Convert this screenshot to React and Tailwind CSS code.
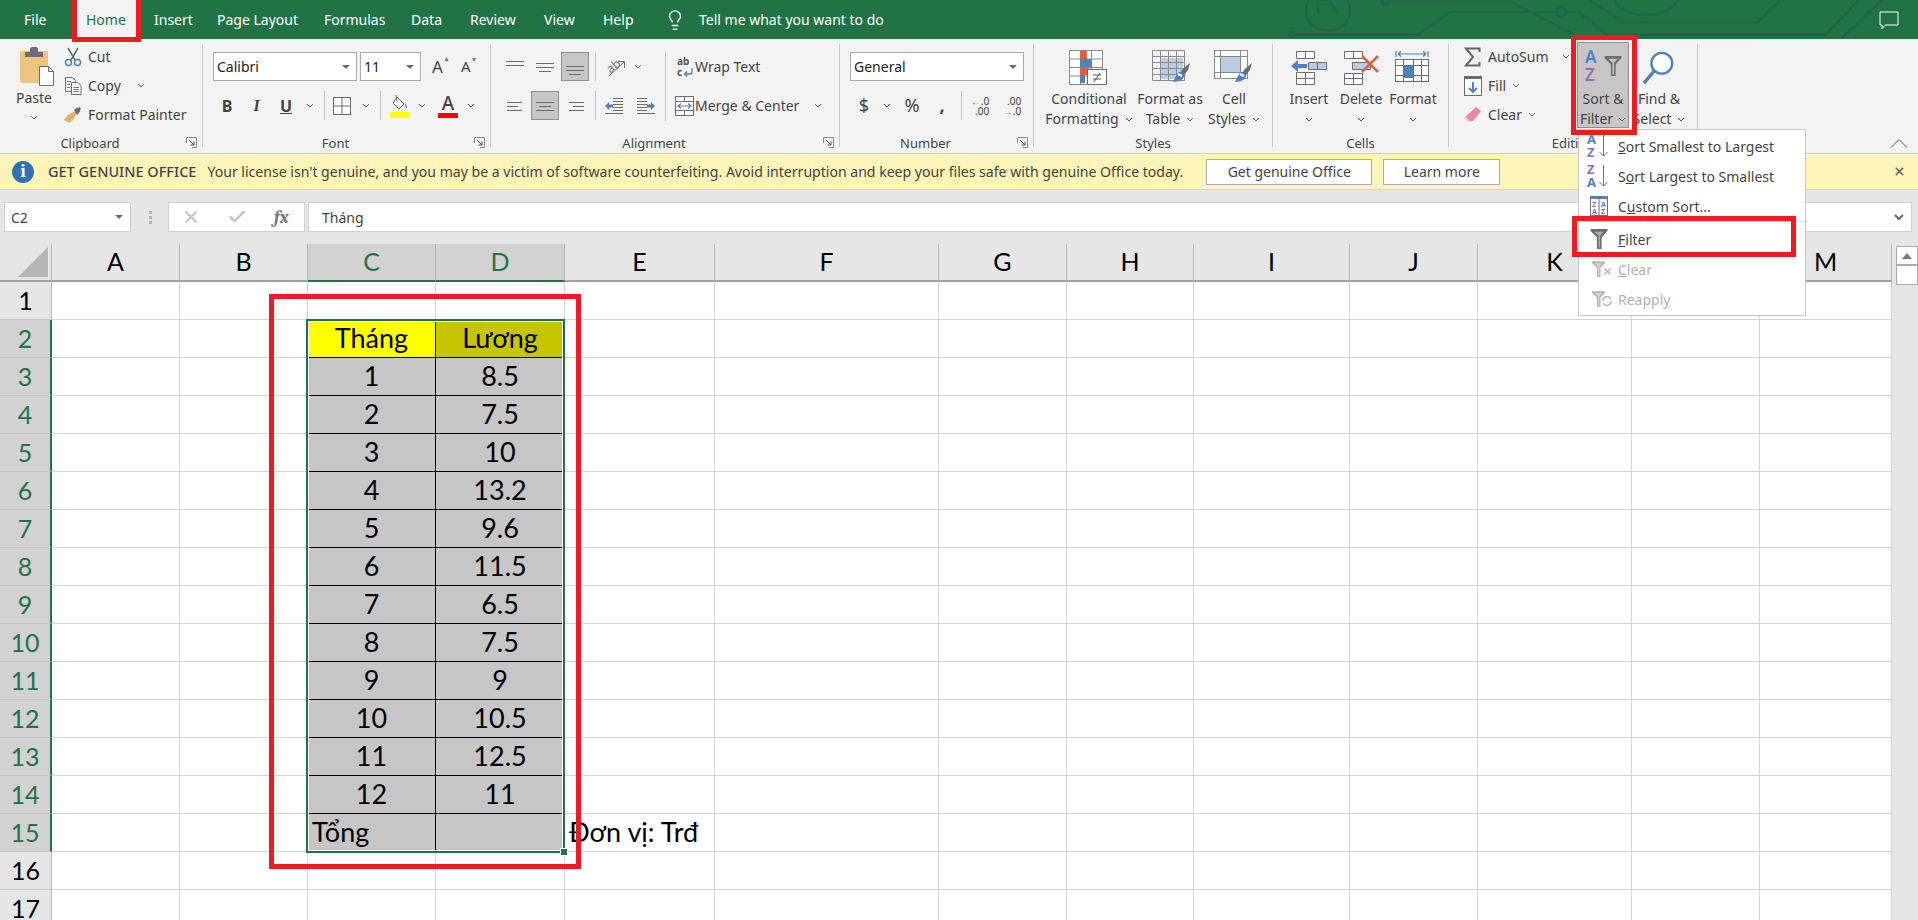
import { Lightbulb, X, Check } from 'lucide-react'

const ICON_GRAY = '#6d6d6d'
const BLUE = '#4f81bd'
const PURPLE = '#9a6ab8'
const ORANGE = '#d8633f'

const TABS = [
  ['File', 'w-[53px]'],
  ['Home', 'mr-[17px] flex h-full w-[60px] items-center bg-[#f3f3f3] pl-[9px] text-[#217346]'],
  ['Insert', 'w-[63px]'],
  ['Page Layout', 'w-[107px]'],
  ['Formulas', 'w-[87px]'],
  ['Data', 'w-[59px]'],
  ['Review', 'w-[74px]'],
  ['View', 'w-[59px]'],
  ['Help', 'w-[61px]'],
]

const COLUMNS = ['A', 'B', 'C', 'D', 'E', 'F', 'G', 'H', 'I', 'J', 'K', 'L', 'M']
const SALARY = ['8.5', '7.5', '10', '13.2', '9.6', '11.5', '6.5', '7.5', '9', '10.5', '12.5', '11']

function Chev({ className = '' }) {
  return (
    <svg width="8" height="5" viewBox="0 0 8 5" className={`shrink-0 ${className}`}>
      <path d="M1 1l3 3 3-3" fill="none" stroke="#666" strokeWidth="1" />
    </svg>
  )
}

function Caret() {
  return (
    <svg width="8" height="4" viewBox="0 0 8 4" className="shrink-0">
      <path d="M0 0h8L4 4z" fill="#6d6d6d" />
    </svg>
  )
}

function Launcher() {
  return (
    <svg width="11" height="11" viewBox="0 0 11 11">
      <path d="M.5 6V.5h10v10H6" fill="none" stroke="#8a8a8a" />
      <path d="M3 3l5 5M8 4.5V8H4.500" fill="none" stroke="#555" />
    </svg>
  )
}

function Lines({ rows, w = 22, h = 18 }) {
  return (
    <svg width={w} height={h} viewBox={`0 0 ${w} ${h}`}>
      {rows.map(([x1, x2, y]) => (
        <path key={`${x1}-${y}`} d={`M${x1} ${y}.5H${x2}`} stroke={ICON_GRAY} />
      ))}
    </svg>
  )
}

function AlignCell({ active, rows }) {
  return (
    <div className={`flex h-[29px] w-[28px] items-center justify-center ${active ? 'border border-[#8f8f8f] bg-[#c6c6c6]' : ''}`}>
      <Lines rows={rows} />
    </div>
  )
}

function PasteIcon() {
  return (
    <svg width="40" height="40" viewBox="0 0 40 40">
      <rect x="5" y="5" width="28" height="32" rx="2" fill="#eec57f" />
      <path d="M10 11V6h5V3c0-1 1-2 2-2h4c1 0 2 1 2 2v3h5v5z" fill={ICON_GRAY} />
      <path d="M24.500 20.500h9l5 5v14h-14z" fill="#fff" stroke={ICON_GRAY} />
      <path d="M33.500 20.500v5h5" fill="none" stroke={ICON_GRAY} />
    </svg>
  )
}

function CutIcon() {
  return (
    <svg width="18" height="20" viewBox="0 0 18 20">
      <path d="M4 1l7 12M14 1L7 13" stroke={ICON_GRAY} strokeWidth="1.600" fill="none" />
      <circle cx="4.500" cy="15.500" r="3" fill="none" stroke={BLUE} strokeWidth="1.500" />
      <circle cx="13.500" cy="15.500" r="3" fill="none" stroke={BLUE} strokeWidth="1.500" />
    </svg>
  )
}

function CopyIcon() {
  return (
    <svg width="18" height="20" viewBox="0 0 18 20">
      <path d="M1.500 1.500h7l3 3v11h-10z" fill="#f3f3f3" stroke={ICON_GRAY} />
      <path d="M7.500 6.500h6l3.500 3v9h-9.500z" fill="#fff" stroke={ICON_GRAY} />
      <path d="M3 5.500h4M3 8.500h3M3 11.500h3" stroke={BLUE} />
      <path d="M9.500 11.500h5.500M9.500 13.500h5.500M9.500 15.500h5.500" stroke={BLUE} />
    </svg>
  )
}

function PainterIcon() {
  return (
    <svg width="18" height="18" viewBox="0 0 18 18">
      <path d="M11 5l2 2-4 7-4 3-5-3 4-5z" fill="#e0b36e" />
      <path d="M10 4l3-2.500 1 .5 1.500-1 1.500 1.500-1 1.500.5 1L13 9z" fill={ICON_GRAY} />
    </svg>
  )
}

function BordersIcon() {
  return (
    <svg width="18" height="18" viewBox="0 0 18 18">
      <rect x=".5" y=".5" width="17" height="17" fill="#fff" stroke={ICON_GRAY} />
      <path d="M9 0v18M0 9h18" stroke={ICON_GRAY} />
    </svg>
  )
}

function FillIcon() {
  return (
    <svg width="20" height="24" viewBox="0 0 20 24">
      <path d="M7 3l7 7-5 5-6-6z" fill="#fff" stroke={ICON_GRAY} />
      <path d="M6 1l1 6" stroke={ICON_GRAY} />
      <path d="M15 9c1.500 2 2 3 2 4s-1 1.500-1.500 0z" fill={BLUE} />
      <rect y="18" width="20" height="6" fill="#ffff00" />
    </svg>
  )
}

function OrientIcon() {
  return (
    <svg width="20" height="20" viewBox="0 0 20 20">
      <text x="1" y="13" fontSize="12" fill={ICON_GRAY} transform="rotate(-40 8 10)" fontFamily="Noto Sans, sans-serif">ab</text>
      <path d="M3 19L18 5M12 4.500h6.500V11" fill="none" stroke={ICON_GRAY} />
    </svg>
  )
}

function IndentIcon({ flip }) {
  return (
    <svg width="18" height="16" viewBox="0 0 18 16" className={flip ? '-scale-x-100' : ''}>
      <path d="M8 .5h10M8 3.500h10M8 6.500h10M8 9.500h10M8 12.500h10M0 15.500h18" stroke={ICON_GRAY} />
      <path d="M0 8l4-4v2.500h4v3H4V12z" fill={BLUE} />
    </svg>
  )
}

function WrapIcon() {
  return (
    <svg width="17" height="22" viewBox="0 0 17 22">
      <text x="0" y="9" fontSize="10" fontWeight="700" fill="#555" fontFamily="Noto Sans, sans-serif">ab</text>
      <text x="0" y="20" fontSize="10" fontWeight="700" fill="#555" fontFamily="Noto Sans, sans-serif">c</text>
      <path d="M15 12v4c0 1-1 2-2 2H8M10 15.500L7.500 18l2.500 2.500" fill="none" stroke={BLUE} strokeWidth="1.300" />
    </svg>
  )
}

function MergeIcon() {
  return (
    <svg width="19" height="20" viewBox="0 0 19 20">
      <rect x=".5" y=".5" width="18" height="19" fill="#fff" stroke={ICON_GRAY} />
      <path d="M0 5.500h19M0 14.500h19M9.500 0v5M9.500 15v5" stroke={ICON_GRAY} />
      <path d="M3 10h13M6 7.500L3 10l3 2.500M13 7.500l3 2.500-3 2.500" fill="none" stroke={BLUE} strokeWidth="1.200" />
    </svg>
  )
}

function GridLines({ x, y, cols, rows, cw, ch }) {
  const out = []
  for (let i = 0; i <= cols; i++) out.push(`M${x + i * cw} ${y}v${rows * ch}`)
  for (let i = 0; i <= rows; i++) out.push(`M${x} ${y + i * ch}h${cols * cw}`)
  return <path d={out.join('')} stroke="#8a8a8a" fill="none" />
}

function ConditionalIcon() {
  return (
    <svg width="40" height="36" viewBox="0 0 40 36">
      <rect x=".5" y=".5" width="33" height="33" fill="#fff" />
      <GridLines x={0.5} y={0.5} cols={3} rows={4} cw={11} ch={8.500} />
      <rect x="11" y="1" width="7" height="8" fill={ORANGE} />
      <rect x="11" y="9" width="12" height="8" fill={BLUE} />
      <rect x="11" y="17" width="9" height="8" fill={ORANGE} />
      <rect x="11" y="25" width="5" height="8" fill={BLUE} />
      <rect x="18.500" y="19.500" width="19" height="15" fill="#fff" stroke={ICON_GRAY} />
      <path d="M24 25h8M24 29h8M31 23l-6 9" stroke="#555" fill="none" />
    </svg>
  )
}

function BrushPart() {
  return (
    <>
      <path d="M21 32l4-8c2-3 6-3 7 0 1 4-3 8-11 8z" fill={BLUE} />
      <path d="M26 24l4 2" stroke="#fff" strokeWidth="2" />
      <path d="M29 21l3 4 4-5 2-7-5 4z" fill={ICON_GRAY} />
    </>
  )
}

function TableIcon() {
  return (
    <svg width="40" height="36" viewBox="0 0 40 36" className="ml-[4px]">
      <rect x="9" y="8" width="22" height="21" fill="#b8cce4" />
      <GridLines x={0.5} y={0.5} cols={4} rows={5} cw={8} ch={6} />
      <BrushPart />
    </svg>
  )
}

function CellStylesIcon() {
  return (
    <svg width="40" height="36" viewBox="0 0 40 36">
      <rect x=".5" y=".5" width="33" height="28" fill="#fff" stroke="#8a8a8a" />
      <path d="M0 6.500h34M0 22.500h34M6.500 0v29M26.500 0v29" stroke="#8a8a8a" />
      <rect x="7" y="7" width="19" height="15" fill="#b8cce4" />
      <BrushPart />
    </svg>
  )
}

function InsertIcon() {
  return (
    <svg width="36" height="36" viewBox="0 0 36 36">
      <path d="M5.500 1.500h18v7h-18zM14.500 1.500v7" fill="#fff" stroke={ICON_GRAY} />
      <path d="M17.500 12.500h18v7h-18zM26.500 12.500v7" fill="#b8cce4" stroke={ICON_GRAY} />
      <path d="M5.500 22.500h18v12h-18zM14.500 22.500v12M5.500 28.500h18" fill="#fff" stroke={ICON_GRAY} />
      <path d="M0 16l7-6v4h9v4H7v4z" fill={BLUE} />
    </svg>
  )
}

function DeleteIcon() {
  return (
    <svg width="36" height="36" viewBox="0 0 36 36">
      <path d="M1.500 1.500h18v7h-18zM10.500 1.500v7" fill="#fff" stroke={ICON_GRAY} />
      <path d="M9.500 12.500h18v7h-18z" fill="#b8cce4" stroke={ICON_GRAY} />
      <path d="M1.500 23.500h18v11h-18zM10.500 23.500v11M1.500 28.500h18" fill="#fff" stroke={ICON_GRAY} />
      <path d="M19 6l16 16M35 6L19 22" stroke={ORANGE} strokeWidth="2.500" />
    </svg>
  )
}

function FormatIcon() {
  return (
    <svg width="36" height="36" viewBox="0 0 36 36">
      <path d="M1 1v6M33 1v6M3 4h28M3 4l3-2.500M3 4l3 2.500M31 4l-3-2.500M31 4l-3 2.500" fill="none" stroke={BLUE} strokeWidth="1.200" />
      <rect x=".5" y="9.500" width="33" height="22" fill="#fff" stroke={ICON_GRAY} />
      <path d="M8.500 9v23M18.500 9v23M26.500 9v23M0 15.500h34M0 25.500h34" stroke={ICON_GRAY} />
      <rect x="9" y="16" width="9" height="12" fill={BLUE} />
    </svg>
  )
}

function FunnelIcon({ w = 18, h = 20, fill = ICON_GRAY, inner = '#a8a8a8' }) {
  return (
    <svg width={w} height={h} viewBox="0 0 16 19">
      <path d="M0 0h16v2l-5.500 6v11h-4.500V8L0 2z" fill={fill} />
      <path d="M3.500 2.500h9L9 6.500v11H7.500v-11z" fill={inner} />
    </svg>
  )
}

function SortLetters({ top, bottom, topColor, bottomColor }) {
  return (
    <svg width="26" height="26" viewBox="0 0 26 26">
      <text x="1" y="11" fontSize="13" fontWeight="700" fill={topColor} fontFamily="Noto Sans, sans-serif">{top}</text>
      <text x="1" y="24" fontSize="13" fontWeight="700" fill={bottomColor} fontFamily="Noto Sans, sans-serif">{bottom}</text>
      <path d="M17.500 2v21M13.500 19l4 4 4-4" fill="none" stroke={ICON_GRAY} />
    </svg>
  )
}

function CustomSortIcon() {
  return (
    <svg width="18" height="20" viewBox="0 0 18 20">
      <rect x=".5" y=".5" width="17" height="19" fill="#fff" stroke={ICON_GRAY} />
      <rect width="18" height="3" fill={BLUE} />
      <path d="M9 3v17" stroke={ICON_GRAY} />
      <text x="2" y="11" fontSize="7" fontWeight="700" fill={PURPLE} fontFamily="Noto Sans, sans-serif">Z</text>
      <text x="2" y="18" fontSize="7" fontWeight="700" fill={BLUE} fontFamily="Noto Sans, sans-serif">A</text>
      <text x="11" y="11" fontSize="7" fontWeight="700" fill={BLUE} fontFamily="Noto Sans, sans-serif">A</text>
      <text x="11" y="18" fontSize="7" fontWeight="700" fill={PURPLE} fontFamily="Noto Sans, sans-serif">Z</text>
    </svg>
  )
}

function Group({ width, label, launcher, children }) {
  return (
    <div className={`flex shrink-0 ${width}`}>
      <div className="flex min-w-0 flex-1 flex-col">
        <div className="flex h-[90px]">{children}</div>
        <div className={`relative flex h-[18px] items-center justify-center text-[13px] leading-none ${launcher ? 'pr-[22px]' : ''}`}>
          {label}
          {launcher && (
            <span className="absolute right-[5px] top-[3px]">
              <Launcher />
            </span>
          )}
        </div>
      </div>
      <span className="h-[103px] w-px bg-[#c6c6c6]" />
    </div>
  )
}

function SmallRow({ icon, children, className = '' }) {
  return (
    <div className={`flex h-[29px] items-center whitespace-nowrap ${className}`}>
      <span className="flex w-[24px] shrink-0 items-center">{icon}</span>
      {children}
    </div>
  )
}

function LargeBtn({ width, icon, line1, line2, className = '' }) {
  return (
    <div className={`flex shrink-0 flex-col items-center whitespace-nowrap leading-[20px] ${width} ${className}`}>
      <div className="flex h-[45px] items-end justify-center pb-[3px]">{icon}</div>
      <span>{line1}</span>
      <span className="flex h-[20px] items-center gap-[6px]">
        {line2}
        <Chev />
      </span>
    </div>
  )
}

function ComboBox({ width, children, gap = '' }) {
  return (
    <div className={`flex h-[29px] items-center justify-between border border-[#ababab] bg-white pl-[3px] pr-[6px] text-[#222] ${width} ${gap}`}>
      <span>{children}</span>
      <Caret />
    </div>
  )
}

function CellBox({ width, children, className = '' }) {
  return <span className={`flex h-[29px] shrink-0 items-center justify-center ${width} ${className}`}>{children}</span>
}

function Sep({ className = '' }) {
  return <span className={`h-[29px] w-px shrink-0 bg-[#c6c6c6] ${className}`} />
}

function Ribbon() {
  return (
    <div className="flex h-[114px] bg-[#f3f3f3] pt-[5px] text-[14px] text-[#444]">
      <Group width="w-[203px]" label="Clipboard" launcher>
        <div className="ml-[15px] flex w-[40px] flex-col items-center">
          <div className="mt-[2px]"><PasteIcon /></div>
          <span className="-ml-[2px] mt-[3px] leading-[18px]">Paste</span>
          <Chev className="-ml-[2px] mt-[8px]" />
        </div>
        <div className="-mt-[2px] ml-[9px] flex flex-col">
          <SmallRow icon={<CutIcon />}>Cut</SmallRow>
          <SmallRow icon={<CopyIcon />}>
            Copy
            <Chev className="ml-[16px]" />
          </SmallRow>
          <SmallRow icon={<PainterIcon />}>Format Painter</SmallRow>
        </div>
      </Group>

      <Group width="w-[288px]" label="Font" launcher>
        <div className="ml-[10px] mt-[8px] flex flex-col">
          <div className="flex items-center">
            <ComboBox width="w-[144px]">Calibri</ComboBox>
            <ComboBox width="w-[61px]" gap="ml-[3px]">11</ComboBox>
            <span className="ml-[11px] flex w-[24px] items-start text-[17px]">A<span className="text-[7px] text-[#4f81bd]">▲</span></span>
            <span className="ml-[5px] flex w-[24px] items-start text-[15px]">A<span className="text-[7px] text-[#4f81bd]">▼</span></span>
          </div>
          <div className="mt-[10px] flex items-center text-[16px]">
            <CellBox width="w-[28px]"><b className="font-bold">B</b></CellBox>
            <CellBox width="w-[31px]"><i className="font-serif font-bold">I</i></CellBox>
            <CellBox width="w-[28px]"><u className="font-bold">U</u></CellBox>
            <CellBox width="w-[20px]"><Chev /></CellBox>
            <Sep className="ml-[4px]" />
            <CellBox width="w-[34px]"><BordersIcon /></CellBox>
            <CellBox width="w-[14px]"><Chev /></CellBox>
            <Sep className="ml-[7px]" />
            <CellBox width="w-[38px]"><FillIcon /></CellBox>
            <CellBox width="w-[6px]"><Chev /></CellBox>
            <CellBox width="w-[40px]" className="ml-[3px]">
              <span className="flex flex-col items-center text-[19px] font-medium leading-[20px]">
                A
                <span className="h-[5px] w-[20px] bg-[#ff0000]" />
              </span>
            </CellBox>
            <CellBox width="w-[6px]"><Chev /></CellBox>
          </div>
        </div>
      </Group>

      <Group width="w-[349px]" label="Alignment" launcher>
        <div className="ml-[10px] mt-[8px] flex items-start">
          <div className="flex flex-col gap-[10px]">
            <div className="flex items-center gap-[2px]">
              <AlignCell rows={[[2, 20, 3], [2, 20, 7]]} />
              <AlignCell rows={[[2, 20, 5], [2, 20, 9], [5, 17, 13]]} />
              <AlignCell active rows={[[2, 20, 8], [2, 20, 12], [5, 17, 16]]} />
              <Sep className="ml-[4px]" />
              <CellBox width="w-[30px]" className="ml-[3px]"><OrientIcon /></CellBox>
              <CellBox width="w-[10px]"><Chev /></CellBox>
            </div>
            <div className="flex items-center gap-[2px]">
              <AlignCell rows={[[3, 18, 5], [3, 14, 9], [3, 18, 13]]} />
              <AlignCell active rows={[[2, 20, 5], [5, 17, 9], [2, 20, 13]]} />
              <AlignCell rows={[[5, 20, 5], [9, 20, 9], [5, 20, 13]]} />
              <Sep className="ml-[4px]" />
              <CellBox width="w-[30px]" className="ml-[1px]"><IndentIcon /></CellBox>
              <CellBox width="w-[30px]"><IndentIcon flip /></CellBox>
            </div>
          </div>
          <span className="ml-[4px] h-[69px] w-px bg-[#c6c6c6]" />
          <div className="flex flex-col gap-[10px] whitespace-nowrap">
            <div className="flex h-[29px] items-center">
              <span className="ml-[11px] w-[18px]"><WrapIcon /></span>
              Wrap Text
            </div>
            <div className="flex h-[29px] items-center">
              <span className="ml-[9px] w-[20px]"><MergeIcon /></span>
              Merge &amp; Center
              <Chev className="ml-[15px]" />
            </div>
          </div>
        </div>
      </Group>

      <Group width="w-[194px]" label="Number" launcher>
        <div className="ml-[10px] mt-[8px] flex flex-col">
          <ComboBox width="w-[174px]">General</ComboBox>
          <div className="mt-[10px] flex items-center text-[18px]">
            <CellBox width="w-[28px]">$</CellBox>
            <CellBox width="w-[18px]"><Chev /></CellBox>
            <CellBox width="w-[32px]">%</CellBox>
            <CellBox width="w-[28px]"><b className="font-bold">,</b></CellBox>
            <Sep className="ml-[5px]" />
            <CellBox width="w-[36px]">
              <span className="flex flex-col items-end text-[10px] leading-[10px]">
                <span><span className="text-[#4f81bd]">←</span>.0</span>
                <span>.00</span>
              </span>
            </CellBox>
            <CellBox width="w-[28px]">
              <span className="flex flex-col items-end text-[10px] leading-[10px]">
                <span>.00</span>
                <span><span className="text-[#4f81bd]">→</span>.0</span>
              </span>
            </CellBox>
          </div>
        </div>
      </Group>

      <Group width="w-[239px]" label="Styles">
        <div className="flex pl-[13px]">
          <LargeBtn width="w-[84px]" icon={<ConditionalIcon />} line1="Conditional" line2="Formatting" />
          <LargeBtn width="w-[78px]" icon={<TableIcon />} line1="Format as" line2="Table" />
          <LargeBtn width="w-[50px]" icon={<CellStylesIcon />} line1="Cell" line2="Styles" />
        </div>
      </Group>

      <Group width="w-[176px]" label="Cells">
        <div className="flex pl-[10px]">
          <LargeBtn width="w-[52px]" icon={<InsertIcon />} line1="Insert" />
          <LargeBtn width="w-[52px]" icon={<DeleteIcon />} line1="Delete" />
          <LargeBtn width="w-[52px]" icon={<FormatIcon />} line1="Format" />
        </div>
      </Group>

      <Group width="w-[249px]" label="Editing">
        <div className="-mt-[2px] ml-[15px] flex w-[113px] shrink-0 flex-col">
          <SmallRow
            icon={
              <svg width="17" height="20" viewBox="0 0 17 20">
                <path d="M15.500 5V1.500H2L9 10l-7 8.500h13.500V15" fill="none" stroke="#666" strokeWidth="2" />
              </svg>
            }
          >
            AutoSum
            <Chev className="ml-[13px]" />
          </SmallRow>
          <SmallRow
            icon={
              <svg width="18" height="20" viewBox="0 0 18 20">
                <rect x=".5" y=".5" width="17" height="19" fill="#fff" stroke={ICON_GRAY} />
                <rect width="18" height="3" fill={ICON_GRAY} />
                <path d="M9 6v10M5 12l4 4 4-4" fill="none" stroke={BLUE} strokeWidth="2" />
              </svg>
            }
          >
            Fill
            <Chev className="ml-[6px]" />
          </SmallRow>
          <SmallRow
            icon={
              <svg width="18" height="18" viewBox="0 0 18 18">
                <path d="M12 1l5 4-8 10H5l-4-4z" fill="#e98a9c" />
                <path d="M1 11l4 4" stroke="#f4c0ca" strokeWidth="2" />
              </svg>
            }
          >
            Clear
            <Chev className="ml-[6px]" />
          </SmallRow>
        </div>
        <div className="-mt-[2px] flex h-[86px] w-[52px] shrink-0 flex-col items-center whitespace-nowrap border border-[#8f8f8f] bg-[#c6c6c6] leading-[20px]">
          <div className="flex h-[46px] shrink-0 items-center gap-[4px]">
            <svg width="16" height="34" viewBox="0 0 16 34">
              <text x="1" y="14" fontSize="17" fontWeight="600" fill={BLUE} fontFamily="Noto Sans, sans-serif">A</text>
              <text x="1" y="32" fontSize="17" fontWeight="600" fill={PURPLE} fontFamily="Noto Sans, sans-serif">Z</text>
            </svg>
            <FunnelIcon inner="#c2c2c2" />
          </div>
          <span className="shrink-0">Sort &amp;</span>
          <span className="flex shrink-0 items-center gap-[5px]">Filter<Chev /></span>
        </div>
        <LargeBtn
          width="w-[60px]"
          icon={
            <svg width="34" height="36" viewBox="0 0 36 38">
              <circle cx="21" cy="14" r="11" fill="#fff" stroke={BLUE} strokeWidth="2.500" />
              <path d="M13 22L2 35" stroke={BLUE} strokeWidth="3.500" />
            </svg>
          }
          line1="Find &"
          line2="Select"
        />
      </Group>

      <div className="flex flex-1 items-end justify-end pb-[5px] pr-[10px]">
        <svg width="18" height="10" viewBox="0 0 18 10">
          <path d="M1 9.500l8-8 8 8" fill="none" stroke="#555" />
        </svg>
      </div>
    </div>
  )
}

function TitleBar() {
  return (
    <div className="relative flex h-[39px] shrink-0 items-center overflow-hidden bg-[#217346] pl-[24px] text-[14px] text-white">
      <svg width="718" height="39" viewBox="1200 0 718 39" className="absolute right-0 top-0" fill="none" stroke="#1f6644" strokeWidth="2.500">
        <ellipse cx="1328" cy="10" rx="22" ry="21" />
        <path d="M1318 -3v16M1318 0h10l10 14" />
        <path d="M1292 35h125l33-23h107M1565 12h14l28 23h218l34-35" />
        <circle cx="1292" cy="35" r="3" />
        <path d="M1385 2h126l64 33M1589 0l34 22h135l23-22" />
        <circle cx="1385" cy="2" r="3" />
        <ellipse cx="1561" cy="12" rx="4" ry="5" />
        <path d="M1615 0c6 20 56 20 62 0" />
        <path d="M1841 39l41-39" />
      </svg>
      {TABS.map(([label, width]) => (
        <span key={label} className={`relative shrink-0 ${width}`}>{label}</span>
      ))}
      <span className="relative flex items-center">
        <Lightbulb size={22} strokeWidth={1.5} />
        <span className="ml-[13px]">Tell me what you want to do</span>
      </span>
      <svg width="20" height="20" viewBox="0 0 20 20" className="absolute right-[19px] top-[11px]">
        <path d="M1 1h18v13H6l-3 4v-4H1z" fill="none" stroke="#fff" />
      </svg>
    </div>
  )
}

function MessageBar() {
  return (
    <div className="flex h-[37px] shrink-0 items-center whitespace-nowrap border-y border-t-[#cfcfcf] border-b-[#dfdc9c] bg-[#fdf5b8] text-[14px] text-[#444]">
      <span className="ml-[12px] flex h-[22px] w-[22px] items-center justify-center rounded-full bg-[#2e74b5] font-serif text-[18px] font-bold text-white">i</span>
      <span className="ml-[14px] text-[14.5px] font-medium">GET GENUINE OFFICE</span>
      <span className="ml-[11px] text-[14.07px]">Your license isn't genuine, and you may be a victim of software counterfeiting. Avoid interruption and keep your files safe with genuine Office today.</span>
      <span className="ml-[23px] flex h-[26px] w-[166px] items-center justify-center border border-[#ababab] bg-white">Get genuine Office</span>
      <span className="ml-[11px] flex h-[26px] w-[117px] items-center justify-center border border-[#ababab] bg-white">Learn more</span>
      <X size={13} strokeWidth={3} className="ml-auto mr-[12px] text-[#666]" />
    </div>
  )
}

function FormulaBar() {
  return (
    <div className="flex h-[54px] shrink-0 items-start bg-[#e6e6e6] pl-[4px] pt-[12px] text-[14px] text-[#444]">
      <div className="flex h-[30px] w-[127px] items-center justify-between border border-[#d0d0d0] bg-white pl-[6px] pr-[7px]">
        C2
        <Caret />
      </div>
      <span className="ml-[18px] flex h-[30px] flex-col justify-center gap-[2px]">
        <span className="h-[3px] w-[3px] bg-[#b5b5b5]" />
        <span className="h-[3px] w-[3px] bg-[#b5b5b5]" />
        <span className="h-[3px] w-[3px] bg-[#b5b5b5]" />
      </span>
      <div className="ml-[16px] flex h-[30px] w-[137px] items-center border border-[#d0d0d0] bg-white">
        <X size={20} strokeWidth={2.5} className="ml-[12px] text-[#c6c6c6]" />
        <Check size={20} strokeWidth={3} className="ml-[26px] text-[#c6c6c6]" />
        <i className="ml-[27px] font-serif text-[18px] font-bold text-[#777]">fx</i>
      </div>
      <div className="ml-[3px] flex h-[30px] w-[1604px] items-center justify-between border border-[#d0d0d0] bg-white pl-[13px] pr-[7px]">
        Tháng
        <svg width="10" height="6" viewBox="0 0 10 6">
          <path d="M1 1l4 4 4-4" fill="none" stroke="#666" strokeWidth="2" />
        </svg>
      </div>
    </div>
  )
}

function dataCellClass(row, col) {
  const selected = (col === 'C' || col === 'D') && row >= 2 && row <= 15
  if (!selected) return 'border-[#d4d4d4]'
  if (row === 2 && col === 'C') return 'border-black bg-[#ffff00]'
  if (row === 2) return 'border-black bg-[#c6c600]'
  return 'border-black bg-[#c6c6c6]'
}

function cellText(row, col) {
  if (col === 'C') {
    if (row === 2) return 'Tháng'
    if (row >= 3 && row <= 14) return row - 2
    if (row === 15) return 'Tổng'
  }
  if (col === 'D') {
    if (row === 2) return 'Lương'
    if (row >= 3 && row <= 14) return SALARY[row - 3]
  }
  if (col === 'E' && row === 15) return 'Đơn vị: Trđ'
  return null
}

function Sheet() {
  const rows = Array.from({ length: 17 }, (_, i) => i + 1)
  return (
    <div className="flex min-h-0 flex-1 overflow-hidden bg-white">
      <div className="grid w-[1892px] shrink-0 grid-cols-[52px_128px_128px_128px_129px_150px_224px_128px_127px_156px_128px_154px_128px_132px] grid-rows-[38px] auto-rows-[38px] font-['Lato','Open_Sans',sans-serif] text-[27px] text-black">
        <div className="flex items-end justify-end border-b-2 border-r border-b-[#a0a0a0] border-r-[#b5b5b5] bg-[#e6e6e6] pb-[3px] pr-[3px]">
          <svg width="30" height="30" viewBox="0 0 30 30">
            <path d="M30 0v30H0z" fill="#b5b5b5" />
          </svg>
        </div>
        {COLUMNS.map(col => {
          const active = col === 'C' || col === 'D'
          return (
            <div
              key={col}
              className={`flex items-center justify-center border-b-2 border-r border-r-[#b5b5b5] text-[25px] ${
                active ? 'border-b-[#217346] bg-[#d2d2d2] text-[#217346]' : 'border-b-[#a0a0a0] bg-[#e6e6e6]'
              }`}
            >
              {col}
            </div>
          )
        })}
        {rows.map(row => {
          const active = row >= 2 && row <= 15
          return [
            <div
              key={`h${row}`}
              className={`flex items-center justify-center border-b border-[#c6c6c6] text-[25px] ${
                active ? 'border-r-2 border-r-[#217346] bg-[#d2d2d2] text-[#217346]' : 'border-r border-r-[#b5b5b5] bg-[#e6e6e6]'
              }`}
            >
              {row}
            </div>,
            ...COLUMNS.map(col => {
              const text = cellText(row, col)
              const left = col === 'E' || text === 'Tổng'
              return (
                <div
                  key={col + row}
                  className={`flex items-center whitespace-nowrap border-b border-r ${left ? 'justify-start pl-[4px]' : 'justify-center'} ${dataCellClass(row, col)}`}
                >
                  {text}
                </div>
              )
            }),
          ]
        })}
      </div>
      <div className="flex flex-1 flex-col items-end bg-[#e6e6e6]">
        <div className="mt-[2px] flex h-[19px] w-[22px] items-center justify-center border border-[#ababab] bg-white">
          <svg width="10" height="6" viewBox="0 0 10 6"><path d="M5 0l5 6H0z" fill="#777" /></svg>
        </div>
        <div className="h-[20px] w-[22px] border border-[#ababab] bg-white" />
      </div>
    </div>
  )
}

function MenuItem({ icon, disabled, children }) {
  return (
    <div className={`flex h-[30px] shrink-0 items-center ${disabled ? 'text-[#b1b1b1]' : 'text-[#444]'}`}>
      <span className="flex w-[39px] items-center justify-center">{icon}</span>
      {children}
    </div>
  )
}

function SortMenu() {
  return (
    <div className="absolute left-[1578px] top-[129px] flex h-[187px] w-[228px] flex-col border border-[#c6c6c6] bg-white pt-[1px] text-[14px]">
      <MenuItem icon={<SortLetters top="A" bottom="Z" topColor={BLUE} bottomColor={PURPLE} />}>
        <span><u>S</u>ort Smallest to Largest</span>
      </MenuItem>
      <MenuItem icon={<SortLetters top="Z" bottom="A" topColor={PURPLE} bottomColor={BLUE} />}>
        <span>S<u>o</u>rt Largest to Smallest</span>
      </MenuItem>
      <MenuItem icon={<CustomSortIcon />}>
        <span>C<u>u</u>stom Sort...</span>
      </MenuItem>
      <div className="mb-[2px] ml-[2px] h-px bg-[#e0e0e0]" />
      <MenuItem icon={<FunnelIcon />}>
        <span><u>F</u>ilter</span>
      </MenuItem>
      <MenuItem
        disabled
        icon={
          <span className="relative flex">
            <FunnelIcon w={13} h={16} fill="#b5b5b5" inner="#d6d6d6" />
            <X size={11} strokeWidth={3} className="absolute -right-[8px] bottom-0 text-[#b5b5b5]" />
          </span>
        }
      >
        <span><u>C</u>lear</span>
      </MenuItem>
      <MenuItem
        disabled
        icon={
          <span className="relative flex">
            <FunnelIcon w={13} h={16} fill="#b5b5b5" inner="#d6d6d6" />
            <svg width="12" height="12" viewBox="0 0 12 12" className="absolute -right-[8px] bottom-0">
              <path d="M2 6a4 4 0 017-3l1 1M10 6a4 4 0 01-7 3L2 8" fill="none" stroke="#b5b5b5" strokeWidth="1.500" />
            </svg>
          </span>
        }
      >
        <span>Reappl<u>y</u></span>
      </MenuItem>
    </div>
  )
}

export default function App() {
  return (
    <div className="relative flex h-[920px] w-[1918px] flex-col overflow-hidden bg-white font-['Noto_Sans','Open_Sans',sans-serif]">
      <TitleBar />
      <Ribbon />
      <MessageBar />
      <FormulaBar />
      <Sheet />

      {/* selected range */}
      <div className="absolute left-[306px] top-[319px] h-[534px] w-[259px] border-2 border-[#217346] shadow-[inset_0_0_0_1px_#fff]" />
      <div className="absolute left-[560px] top-[848px] h-[8px] w-[8px] border border-white bg-[#217346]" />

      <SortMenu />

      {/* red annotations */}
      <div className="absolute left-[72px] top-[-5px] h-[47px] w-[69px] border-[5px] border-[#ed1c24]" />
      <div className="absolute left-[1571px] top-[35px] h-[100px] w-[66px] border-[5px] border-[#ed1c24]" />
      <div className="absolute left-[1572px] top-[216px] h-[41px] w-[224px] border-[5px] border-[#ed1c24]" />
      <div className="absolute left-[269px] top-[294px] h-[575px] w-[312px] border-[5px] border-[#ed1c24]" />
    </div>
  )
}
